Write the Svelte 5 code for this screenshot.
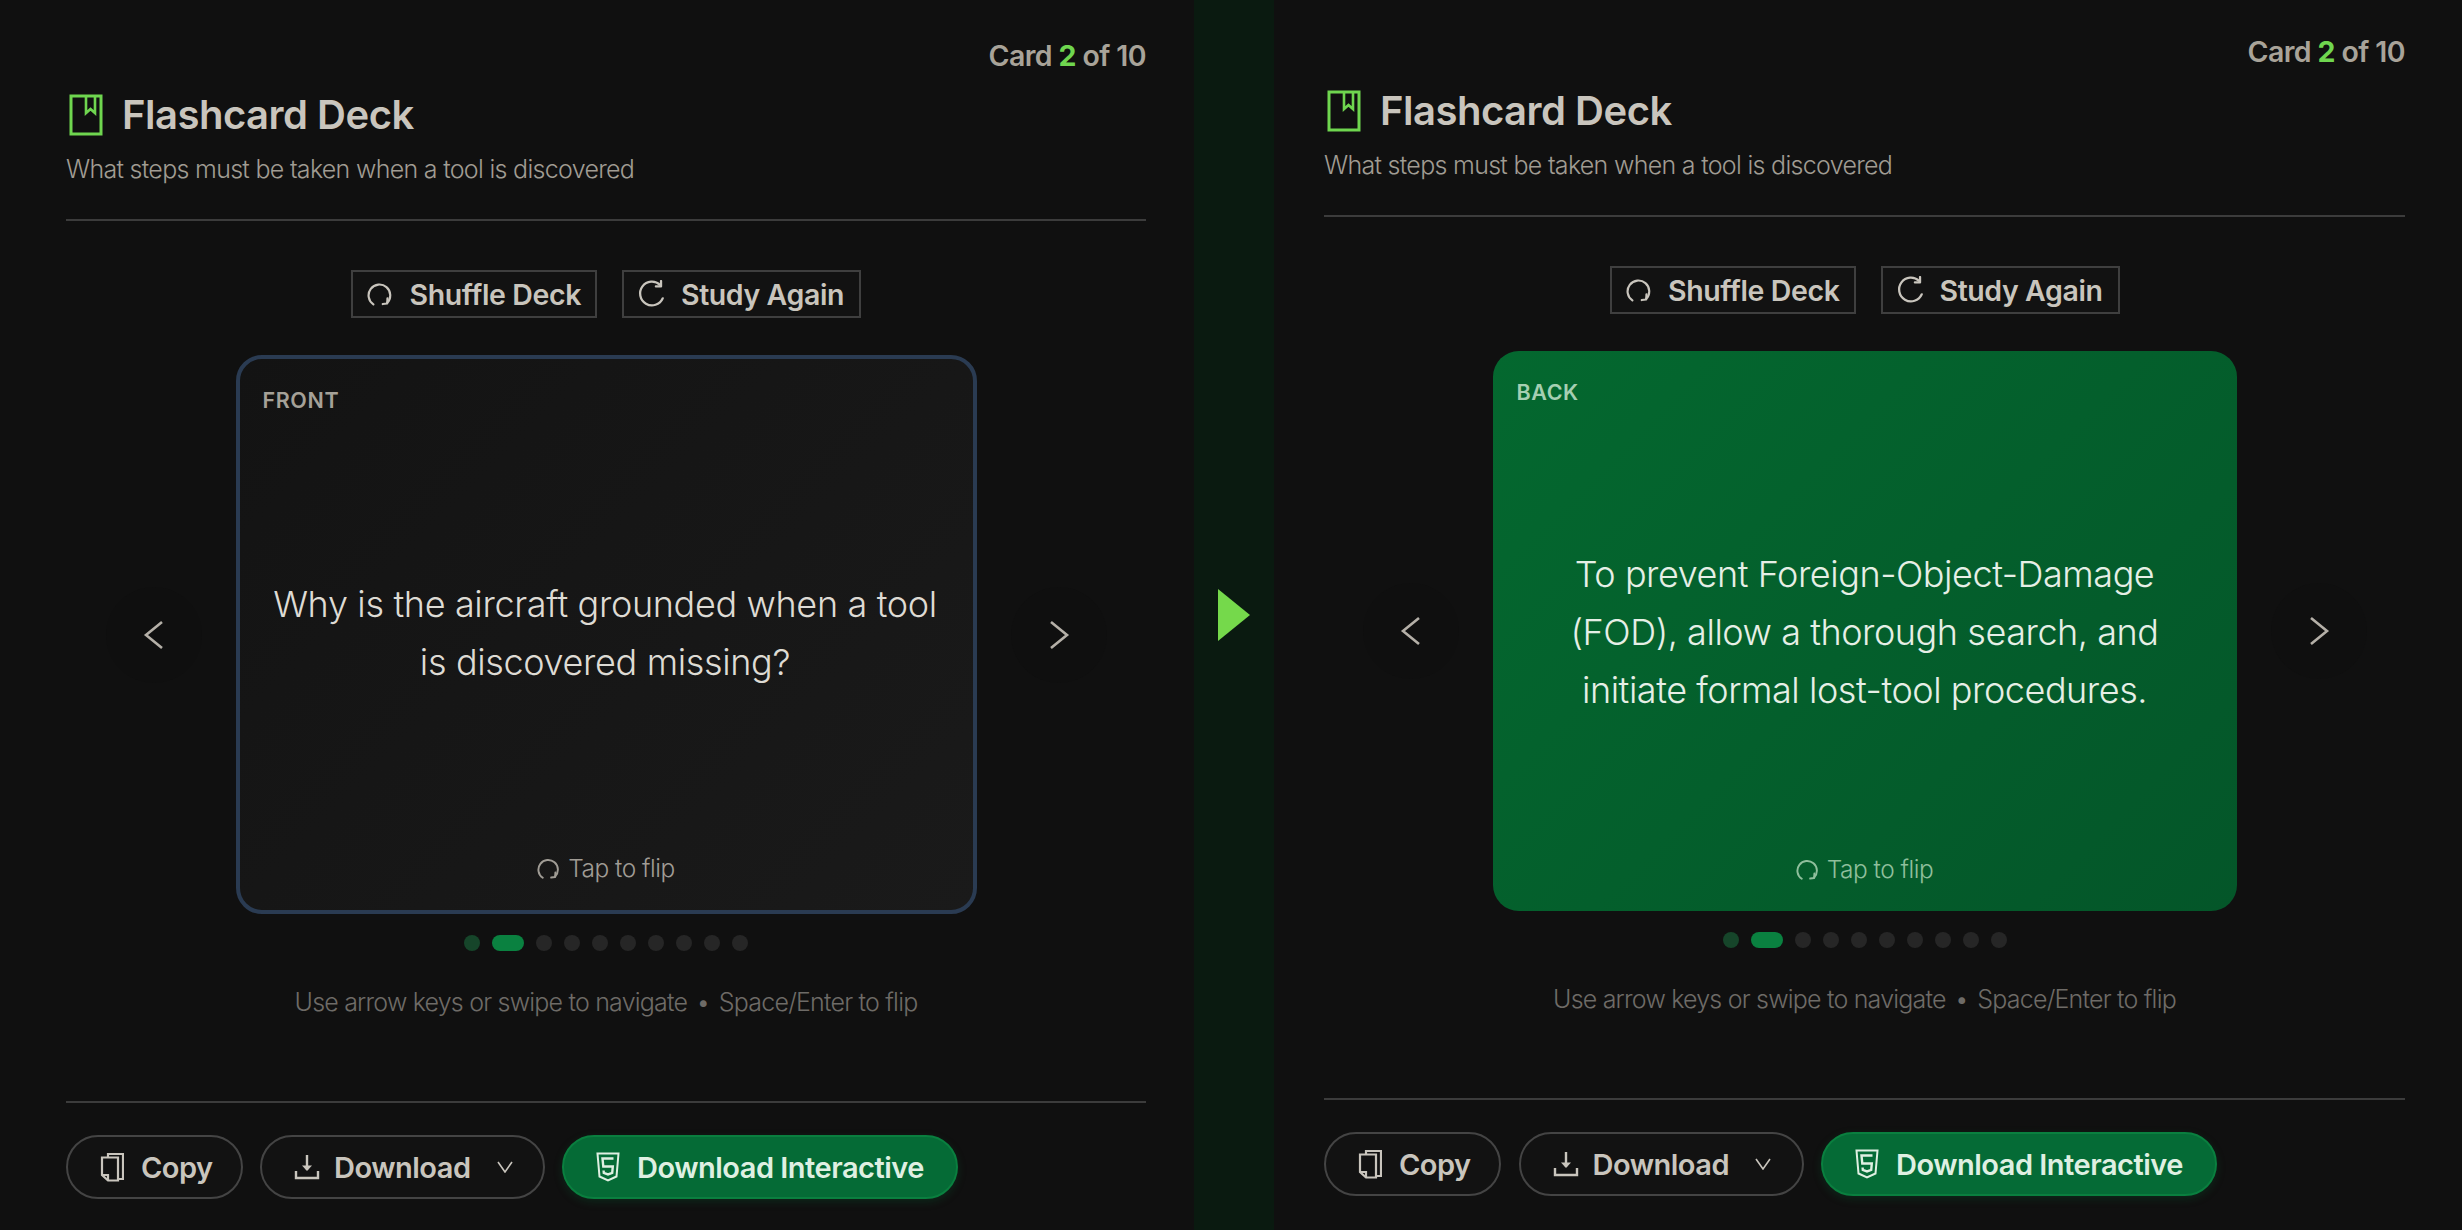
<script>
  const dots = [0, 1, 2, 3, 4, 5, 6, 7, 8, 9];
  const current = 1;
</script>

{#snippet flipIcon(size)}
  <svg width={size} height={size} viewBox="0 0 26 26" fill="none" stroke="currentColor" stroke-width="2.2" stroke-linecap="round" stroke-linejoin="round">
    <path d="M6.5 23.5 A11 11 0 1 1 20.5 22" />
    <path d="M20.8 17.5 L20.5 22.6 L16 23.2" />
  </svg>
{/snippet}

{#snippet panel(side, label, lines)}
  <section class="panel {side}">
    <div class="count">Card <b>2</b> of 10</div>
    <header>
      <svg class="book" width="34" height="42" viewBox="0 0 34 42" fill="none" stroke="#6fd64f" stroke-width="3">
        <rect x="2" y="2" width="30" height="38" />
        <path d="M17 2 V19 L21.5 15 L26 19 V2" stroke-width="2.6" />
      </svg>
      <h1>Flashcard Deck</h1>
    </header>
    <p class="sub">What steps must be taken when a tool is discovered</p>
    <hr class="rule-top" />

    <div class="tools">
      <button class="tool shuffle">{@render flipIcon(26)}<span>Shuffle Deck</span></button>
      <button class="tool again">
        <svg width="28" height="28" viewBox="0 0 26 26" fill="none" stroke="currentColor" stroke-width="2.1" stroke-linecap="round" stroke-linejoin="round">
          <path d="M23 17 A11 11 0 1 1 20.5 4.5" />
          <path d="M21.4 1 L21.4 6 L16.6 6" />
        </svg>
        <span>Study Again</span>
      </button>
    </div>

    <div class="stage">
      <button class="nav" aria-label="Previous">
        <svg width="22" height="30" viewBox="0 0 22 30" fill="none" stroke="currentColor" stroke-width="2.6"><path d="M19 2 L3 15 L19 28" /></svg>
      </button>
      <div class="card">
        <span class="face">{label}</span>
        <div class="text">
          {#each lines as line}<div>{line}</div>{/each}
        </div>
        <div class="flip">{@render flipIcon(23)}<span>Tap to flip</span></div>
      </div>
      <button class="nav" aria-label="Next">
        <svg width="22" height="30" viewBox="0 0 22 30" fill="none" stroke="currentColor" stroke-width="2.6"><path d="M3 2 L19 15 L3 28" /></svg>
      </button>
    </div>

    <div class="dots">
      {#each dots as d}
        <i class:done={d < current} class:active={d === current}></i>
      {/each}
    </div>
    <p class="hint">Use arrow keys or swipe to navigate <span class="sep">•</span> Space/Enter to flip</p>
    <hr class="rule-bottom" />

    <footer>
      <button class="pill copy">
        <svg width="24" height="30" viewBox="0 0 24 30" fill="none" stroke="currentColor" stroke-width="2.2">
          <path d="M8 5 V2 H23 V27 H19" />
          <path d="M2 5.5 H18 V28.5 H8 L2 23 Z" />
          <path d="M2 23 H8 V28.5" />
        </svg>
        <span>Copy</span>
      </button>
      <button class="pill download">
        <svg width="26" height="26" viewBox="0 0 26 26" fill="none" stroke="currentColor" stroke-width="2.4">
          <path d="M13 1 V16" />
          <path d="M8 11.5 L13 17 L18 11.5" fill="currentColor" stroke="none" />
          <path d="M2 17 V24 H24 V17" />
        </svg>
        <span>Download</span>
        <svg class="caret" width="16" height="12" viewBox="0 0 16 12" fill="none" stroke="currentColor" stroke-width="1.6"><path d="M1 1 L8 11 L15 1" /></svg>
      </button>
      <button class="pill primary">
        <svg width="24" height="30" viewBox="0 0 24 30" fill="none" stroke="currentColor" stroke-width="2">
          <path d="M1.5 1.5 H22.5 L20.5 24.5 L12 28.5 L3.5 24.5 Z" />
          <path d="M17.5 6.5 H6.5 L7.3 14.5 H16.8 L16.2 21 L12 22.5 L7.8 21 L7.6 18.5" stroke-width="2.4" />
        </svg>
        <span>Download Interactive</span>
      </button>
    </footer>
  </section>
{/snippet}

<main>
  {@render panel('left', 'FRONT', ['Why is the aircraft grounded when a tool', 'is discovered missing?'])}
  <div class="strip">
    <svg width="32" height="52" viewBox="0 0 32 52"><path d="M0 0 L32 26 L0 52 Z" fill="#75d94b" /></svg>
  </div>
  {@render panel('right', 'BACK', ['To prevent Foreign-Object-Damage', '(FOD), allow a thorough search, and', 'initiate formal lost-tool procedures.'])}
</main>

<style>
  :global(body) {
    margin: 0;
    background: #101010;
  }
  main {
    display: grid;
    grid-template-columns: 1194px 80px 1188px;
    width: 2462px;
    height: 1230px;
    overflow: hidden;
    font-family: Inter, "Liberation Sans", sans-serif;
    background: #101010;
  }
  .strip {
    display: flex;
    align-items: center;
    justify-content: center;
    background: #0a1a10;
  }
  .panel {
    display: flex;
    flex-direction: column;
    box-sizing: border-box;
  }
  .left {
    width: 1080px;
    margin-left: 66px;
    padding-top: 39px;
  }
  .right {
    width: 1081px;
    margin-left: 50px;
    padding-top: 35px;
  }

  .count {
    align-self: flex-end;
    height: 34px;
    line-height: 34px;
    font-size: 28.5px;
    font-weight: 600;
    letter-spacing: -0.6px;
    color: #a8a399;
  }
  .count b {
    font-weight: 700;
    color: #6fd64f;
  }
  header {
    display: flex;
    align-items: center;
    gap: 19px;
    height: 46px;
    margin: 19px 0 0 3px;
  }
  h1 {
    margin: 0;
    font-size: 40px;
    line-height: 46px;
    font-weight: 600;
    letter-spacing: -0.5px;
    color: #c9c5bd;
  }
  .sub {
    margin: 14px 0 0;
    height: 34px;
    line-height: 34px;
    font-size: 25px;
    font-weight: 300;
    letter-spacing: -0.7px;
    color: #a09c93;
  }
  hr {
    width: 100%;
    height: 2px;
    margin: 0;
    border: 0;
    background: #3c3c3c;
  }
  .rule-top {
    margin-top: 33px;
  }

  .tools {
    display: flex;
    justify-content: center;
    gap: 25px;
    margin-top: 49px;
  }
  button {
    font-family: inherit;
    cursor: pointer;
  }
  .tool {
    display: flex;
    align-items: center;
    box-sizing: border-box;
    height: 48px;
    padding: 0 14px;
    gap: 17px;
    background: #121212;
    border: 2px solid #3f3f3f;
    font-size: 28.5px;
    font-weight: 600;
    letter-spacing: -0.4px;
    white-space: nowrap;
    color: #c9c5bd;
  }
  .shuffle {
    width: 246px;
  }
  .again {
    width: 239px;
    gap: 15px;
  }

  .stage {
    display: flex;
    align-items: center;
    justify-content: center;
    gap: 34px;
    margin-top: 37px;
  }
  .nav {
    display: flex;
    align-items: center;
    justify-content: center;
    width: 96px;
    height: 96px;
    padding: 0;
    border: 0;
    border-radius: 50%;
    background: #0f0f0f;
    color: #b5b0a8;
  }
  .card {
    position: relative;
    display: flex;
    align-items: center;
    justify-content: center;
    box-sizing: border-box;
    text-align: center;
  }
  .left .card {
    width: 741px;
    height: 559px;
    border: 4px solid #2a3b52;
    border-radius: 26px;
    background: linear-gradient(135deg, #131313, #1a1a1a);
    color: #dedbd4;
  }
  .right .card {
    width: 744px;
    height: 560px;
    border-radius: 26px;
    background: linear-gradient(135deg, #04682f, #045629);
    color: #e6efe6;
  }
  .face {
    position: absolute;
    font-size: 21.5px;
    font-weight: 600;
    letter-spacing: 0.6px;
  }
  .left .face {
    top: 28px;
    left: 23px;
    color: #a5a198;
  }
  .right .face {
    top: 28px;
    left: 24px;
    color: #a6cfb2;
  }
  .text {
    font-size: 36px;
    font-weight: 300;
    line-height: 58px;
    letter-spacing: -0.35px;
  }
  .left .text {
    margin-top: -3px;
    margin-left: -2px;
  }
  .right .text {
    margin-top: 2px;
    letter-spacing: -0.45px;
  }
  .flip {
    position: absolute;
    left: 0;
    right: 0;
    display: flex;
    align-items: center;
    justify-content: center;
    gap: 8px;
    font-size: 24.5px;
    font-weight: 300;
    letter-spacing: -0.5px;
  }
  .left .flip {
    bottom: 27px;
    color: #a09c95;
  }
  .right .flip {
    bottom: 27px;
    color: #8fbf9c;
  }

  .dots {
    display: flex;
    justify-content: center;
    gap: 12px;
    margin-top: 21px;
  }
  .dots i {
    display: block;
    width: 16px;
    height: 16px;
    border-radius: 8px;
    background: #262626;
  }
  .dots i.done {
    background: #16452a;
  }
  .dots i.active {
    width: 32px;
    background: #0a8140;
  }
  .hint {
    margin: 35px 0 0;
    height: 32px;
    line-height: 32px;
    text-align: center;
    font-size: 25px;
    font-weight: 300;
    letter-spacing: -0.8px;
    color: #6e6b67;
  }
  .sep {
    margin: 0 3px;
  }
  .rule-bottom {
    margin-top: 83px;
  }

  footer {
    display: flex;
    gap: 17px;
    margin-top: 32px;
  }
  .right footer {
    gap: 17.5px;
  }
  .pill {
    display: flex;
    align-items: center;
    box-sizing: border-box;
    height: 64px;
    border: 2px solid #444;
    border-radius: 32px;
    background: #121212;
    font-size: 29px;
    font-weight: 600;
    letter-spacing: -0.5px;
    white-space: nowrap;
    color: #c9c5bd;
  }
  .copy {
    width: 177px;
    padding: 0 0 0 32px;
    gap: 17px;
  }
  .download {
    width: 285px;
    padding: 0 0 0 32px;
    gap: 14px;
  }
  .caret {
    margin-left: 12px;
  }
  .primary {
    width: 396px;
    padding: 0 0 0 32px;
    gap: 17px;
    border-color: #0a7f3f;
    background: #056b36;
    box-shadow: 0 3px 8px rgba(5, 107, 54, 0.25);
    color: #dff0e2;
  }
</style>
